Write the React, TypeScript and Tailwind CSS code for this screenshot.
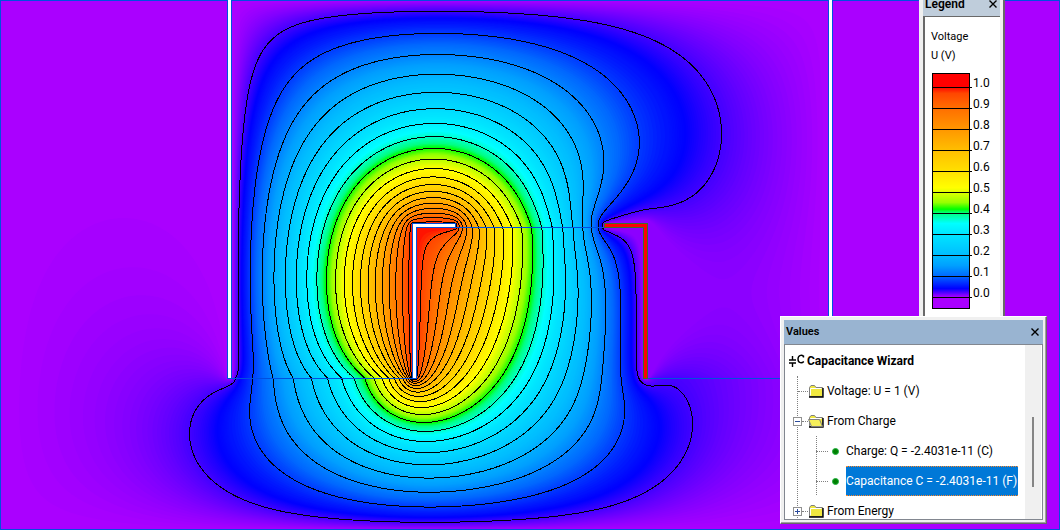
import React, { useMemo } from 'react';
import clsx from 'clsx';

const WIDTH = 1060;
const HEIGHT = 530;
const STEP = 2;
const COLS = WIDTH / STEP + 1;
const ROWS = HEIGHT / STEP + 1;

// relative permittivity of the substrate around and below the grooves
const SUBSTRATE = 4.2;

type Stop = [number, number, number, number];

const colorStops: Stop[] = [
  [0, 170, 0, 255],
  [0.04, 0, 0, 255],
  [0.1, 0, 105, 255],
  [0.15, 0, 160, 255],
  [0.2, 0, 190, 255],
  [0.3, 0, 230, 255],
  [0.35, 0, 255, 255],
  [0.4, 0, 255, 128],
  [0.418, 0, 255, 0],
  [0.45, 150, 255, 0],
  [0.52, 255, 255, 0],
  [0.6, 255, 224, 0],
  [0.7, 255, 190, 0],
  [0.8, 255, 150, 0],
  [0.9, 255, 110, 0],
  [0.97, 255, 70, 0],
  [1, 255, 0, 0],
];

function colorAt(u: number) {
  const i = Math.max(1, colorStops.findIndex(s => s[0] >= u));
  const a = colorStops[i - 1];
  const b = colorStops[i];
  const t = (u - a[0]) / (b[0] - a[0]);
  const mix = [1, 2, 3].map(k => Math.round(a[k] + (b[k] - a[k]) * t));
  return `rgb(${mix.join(',')})`;
}

// x0, y0, x1, y1, voltage
const electrodes = [
  [228, 0, 232, 378, 0],
  [828, 0, 832, 378, 0],
  [604, 224, 648, 228, 0],
  [644, 224, 648, 378, 0],
  [412, 224, 456, 228, 1],
  [412, 224, 416, 378, 1],
];

function permittivity(x: number, y: number) {
  if (y > 378 || x < 230 || x > 830) return SUBSTRATE;
  return x > 414 && x < 646 && y > 227 ? SUBSTRATE : 1;
}

function solveField() {
  const n = COLS * ROWS;
  const u = new Float64Array(n);
  const fixed = new Uint8Array(n);
  const we = new Float64Array(n);
  const ww = new Float64Array(n);
  const wn = new Float64Array(n);
  const ws = new Float64Array(n);

  for (let j = 1; j < ROWS - 1; j++) {
    for (let i = 1; i < COLS - 1; i++) {
      const k = j * COLS + i;
      const x = i * STEP;
      const y = j * STEP;
      const ne = permittivity(x + 1, y - 1);
      const nw = permittivity(x - 1, y - 1);
      const se = permittivity(x + 1, y + 1);
      const sw = permittivity(x - 1, y + 1);
      const sum = 2 * (ne + nw + se + sw);
      we[k] = (ne + se) / sum;
      ww[k] = (nw + sw) / sum;
      wn[k] = (ne + nw) / sum;
      ws[k] = (se + sw) / sum;
      for (const [x0, y0, x1, y1, volts] of electrodes) {
        if (x >= x0 && x <= x1 && y >= y0 && y <= y1) {
          fixed[k] = 1;
          u[k] = volts;
        }
      }
    }
  }

  const omega = 1.98;
  for (let pass = 0; pass < 650; pass++) {
    for (let j = 1; j < ROWS - 1; j++) {
      for (let k = j * COLS + 1; k < (j + 1) * COLS - 1; k++) {
        if (fixed[k]) continue;
        const next = we[k] * u[k + 1] + ww[k] * u[k - 1] + wn[k] * u[k - COLS] + ws[k] * u[k + COLS];
        u[k] += omega * (next - u[k]);
      }
    }
  }
  return u;
}

// Marching squares. Points are keyed by the grid edge they lie on:
// 2k is the edge going right from node k, 2k + 1 the edge going down.
function contourPath(u: Float64Array, level: number) {
  const links = new Map<number, number[]>();
  const link = (a: number, b: number) => {
    if (!links.has(a)) links.set(a, []);
    if (!links.has(b)) links.set(b, []);
    links.get(a)!.push(b);
    links.get(b)!.push(a);
  };

  for (let j = 0; j < ROWS - 1; j++) {
    for (let i = 0; i < COLS - 1; i++) {
      const k = j * COLS + i;
      const a = u[k] >= level;
      const b = u[k + 1] >= level;
      const c = u[k + COLS + 1] >= level;
      const d = u[k + COLS] >= level;
      if (a === b && b === c && c === d) continue;
      const crossed: number[] = [];
      if (a !== b) crossed.push(2 * k);
      if (b !== c) crossed.push(2 * (k + 1) + 1);
      if (c !== d) crossed.push(2 * (k + COLS));
      if (d !== a) crossed.push(2 * k + 1);
      link(crossed[0], crossed[1]);
      if (crossed.length === 4) link(crossed[2], crossed[3]);
    }
  }

  const point = (edge: number) => {
    const k = edge >> 1;
    const down = edge & 1;
    const other = down ? k + COLS : k + 1;
    const t = (level - u[k]) / (u[other] - u[k]);
    const x = ((k % COLS) + (down ? 0 : t)) * STEP;
    const y = (Math.floor(k / COLS) + (down ? t : 0)) * STEP;
    return `${x.toFixed(1)} ${y.toFixed(1)}`;
  };

  const seen = new Set<number>();
  let path = '';
  for (const start of links.keys()) {
    if (seen.has(start)) continue;
    const points: string[] = [];
    let edge: number | undefined = start;
    while (edge !== undefined) {
      seen.add(edge);
      points.push(point(edge));
      edge = links.get(edge)!.find(e => !seen.has(e));
    }
    path += `M${points.join('L')}Z`;
  }
  return path;
}

const FieldMap = () => {
  const { bands, lines } = useMemo(() => {
    const u = solveField();
    const levels: number[] = [];
    for (let v = 0.001; v < 0.05; v += 0.001) levels.push(v);
    for (let v = 0.05; v < 0.2; v += 0.003) levels.push(v);
    for (let v = 0.2; v < 0.998; v += 0.006) levels.push(v);
    return {
      bands: levels.map(v => ({ color: colorAt(v), d: contourPath(u, v) })),
      lines: Array.from({ length: 20 }, (_, i) => contourPath(u, 0.025 + i * 0.05)),
    };
  }, []);

  return (
    <svg viewBox={`0 0 ${WIDTH} ${HEIGHT}`} className="block w-full" role="img" aria-label="Voltage field map">
      <rect width={WIDTH} height={HEIGHT} fill="#aa00ff" />
      {bands.map((band, i) => (
        <path key={i} d={band.d} fill={band.color} />
      ))}
      <g fill="none" stroke="#000" shapeRendering="crispEdges">
        {lines.map((d, i) => (
          <path key={i} d={d} />
        ))}
      </g>
      <g stroke="#0050e0" fill="none" shapeRendering="crispEdges">
        <path d="M0 .5H1060M.5 0V530M1059.5 0V530M0 529.5H1060" />
        <path d="M228 378.5H415M456 227.5H605M646 378.5H830" />
        <path d="M227.5 0V378.5H231.5V0M828.5 0V378.5H832.5V0" fill="#fff" />
        <path d="M412.5 223.5H455.5V227.5H416.5V378.5H412.5Z" fill="#fff" />
      </g>
      <path
        d="M604.5 223.5H647.5V378.5H643.5V227.5H604.5Z"
        fill="#f00"
        stroke="#3c6e28"
        strokeWidth="1"
        shapeRendering="crispEdges"
      />
      <path d="M605 224H647V378H644V227H605Z" fill="#f00" />
    </svg>
  );
};

const CloseButton = ({ label }: { label: string }) => (
  <button type="button" aria-label={label} className="flex size-3 items-center justify-center">
    <svg viewBox="0 0 8 8" className="size-2" stroke="#000" strokeWidth="1.4">
      <path d="M.5 .5L7.5 7.5M7.5 .5L.5 7.5" />
    </svg>
  </button>
);

const legendLabels = ['1.0', '0.9', '0.8', '0.7', '0.6', '0.5', '0.4', '0.3', '0.2', '0.1', '0.0'];

const Legend = () => (
  <section className="absolute -top-2 right-[55px] w-[86px] border-r-2 border-r-[#696969] bg-[#f0f0f0] pr-[3px] pl-1">
    <header className="flex h-6 items-center justify-between bg-[#bfcddb] pr-[1px] pl-[2px]">
      <h2 className="text-[12px] leading-4 font-semibold">Legend</h2>
      <CloseButton label="Close legend" />
    </header>
    <div className="h-[320px] border-t border-l-2 border-[#696969] bg-white pt-2.5 pl-1.5 text-[11px]">
      <p className="leading-[19px]">Voltage</p>
      <p className="leading-[19px]">U (V)</p>
      <div className="mt-2 flex">
        <svg width="42" height="236" viewBox="0 0 42 236" shapeRendering="crispEdges">
          <defs>
            <linearGradient id="scale" gradientUnits="userSpaceOnUse" x1="0" y1="224" x2="0" y2="14">
              {colorStops.map(([u]) => (
                <stop key={u} offset={u} stopColor={colorAt(u)} />
              ))}
            </linearGradient>
          </defs>
          <rect x="1.5" y=".5" width="37" height="235" fill="url(#scale)" stroke="#000" />
          {legendLabels.map((label, i) => (
            <path key={label} d={`M1 ${14.5 + i * 21}H41`} stroke="#000" />
          ))}
        </svg>
        <ul className="text-[12px] leading-[21px]">
          {legendLabels.map(label => (
            <li key={label}>{label}</li>
          ))}
        </ul>
      </div>
    </div>
  </section>
);

const Folder = ({ open = false }: { open?: boolean }) => (
  <svg viewBox="0 0 16 14" className="h-3.5 w-4 shrink-0">
    <path d="M1.5 12.5V3.5L3 1.5H6.5L8 3.5H14.5V12.5Z" fill="#f0e840" stroke="#808080" />
    <path d="M2.5 11.5V4.5H13.5" fill="none" stroke="#fff" />
    <path d="M1 13H15V4" fill="none" stroke="#000" strokeWidth="1.4" />
    {open && <path d="M.5 5.5H11.5L14.5 12.5H3.5Z" fill="#f5ef5a" stroke="#808080" />}
  </svg>
);

const Expander = ({ expanded, label }: { expanded: boolean; label: string }) => (
  <button
    type="button"
    aria-label={label}
    aria-expanded={expanded}
    className="z-10 flex size-[9px] shrink-0 items-center justify-center border border-[#919191] bg-white"
  >
    <svg viewBox="0 0 5 5" className="size-[5px]" stroke="#2b4a9b" shapeRendering="crispEdges">
      <path d={expanded ? 'M0 2.5H5' : 'M0 2.5H5M2.5 0V5'} />
    </svg>
  </button>
);

const Result = ({ text, selected }: { text: string; selected?: boolean }) => (
  <li className="flex h-[30px] items-center">
    <span className="w-3 border-t border-dotted border-[#808080]" />
    <span className="ml-1 size-[7px] rounded-full border border-[#20b040] bg-[#008000]" />
    <span
      className={clsx(
        'ml-[7px] flex h-[30px] items-center whitespace-nowrap',
        selected && 'w-[172px] border-y border-dotted border-[#ff8728] bg-[#0078d7] text-white'
      )}
    >
      {text}
    </span>
  </li>
);

const ValuesPanel = () => (
  <section className="absolute top-[316px] right-[13px] w-[267px] border border-t-white border-r-[#696969] border-b-[#696969] border-l-white bg-[#f0f0f0] p-[3px] shadow-[inset_-1px_-1px_0_#a0a0a0]">
    <header className="flex h-6 items-center justify-between bg-[#99b4d1] pr-[2px] pl-[2px]">
      <h2 className="text-[11px] leading-4 font-semibold">Values</h2>
      <CloseButton label="Close values" />
    </header>
    <div className="flex h-[176px] overflow-hidden border border-[#828790] bg-white">
      <div className="min-w-0 flex-1 text-[12px]">
        <h3 className="mt-[1px] flex h-[30px] items-center gap-[2px] pl-1 font-bold">
          <svg viewBox="0 0 16 14" className="h-3.5 w-4 shrink-0">
            <path d="M0 6H7M0 9H7M3.5 2V6M3.5 9V13" stroke="#000" strokeWidth="1.4" />
            <path
              d="M14.500 3.500V1.500M14.500 3C14 .5 9 .5 9 5S13 9.500 14.800 7.500"
              fill="none"
              stroke="#000"
              strokeWidth="1.4"
            />
          </svg>
          Capacitance Wizard
        </h3>
        <ul className="ml-3 border-l border-dotted border-[#808080]">
          <li className="flex h-[30px] items-center">
            <span className="w-2.5 border-t border-dotted border-[#808080]" />
            <Folder />
            <span className="ml-[3px]">Voltage: U = 1 (V)</span>
          </li>
          <li>
            <div className="-ml-[5px] flex h-[30px] items-center">
              <Expander expanded label="Collapse From Charge" />
              <span className="w-1.5 border-t border-dotted border-[#808080]" />
              <Folder open />
              <span className="ml-[3px]">From Charge</span>
            </div>
            <ul className="ml-[18px] bg-[linear-gradient(#808080_50%,transparent_50%)] bg-[size:1px_2px] bg-[position:0_0] bg-repeat-y">
              <Result text="Charge: Q = -2.4031e-11 (C)" />
              <Result text="Capacitance C = -2.4031e-11 (F)" selected />
            </ul>
          </li>
          <li className="-ml-[5px] flex h-[30px] items-center">
            <Expander expanded={false} label="Expand From Energy" />
            <span className="w-1.5 border-t border-dotted border-[#808080]" />
            <Folder />
            <span className="ml-[3px]">From Energy</span>
          </li>
        </ul>
      </div>
      <div className="mr-[1px] flex w-4 justify-center bg-[#f0f0f0] pt-[72px]">
        <div className="h-[70px] w-[2px] bg-[#858585]" />
      </div>
    </div>
  </section>
);

export default function App() {
  return (
    <main className="relative w-full overflow-hidden font-['Roboto','Noto_Sans',sans-serif] text-black">
      <FieldMap />
      <Legend />
      <ValuesPanel />
    </main>
  );
}
